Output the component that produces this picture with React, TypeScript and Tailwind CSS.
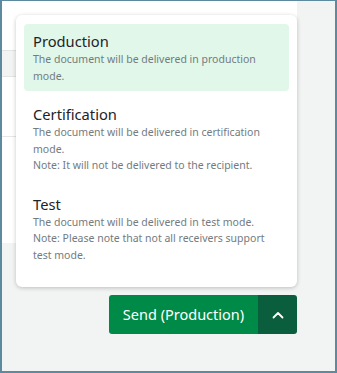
import React from "react";

const items = [
  {
    title: "Production",
    lines: ["The document will be delivered in production mode."],
    active: true,
  },
  {
    title: "Certification",
    lines: [
      "The document will be delivered in certification mode.",
      "Note: It will not be delivered to the recipient.",
    ],
    active: false,
  },
  {
    title: "Test",
    lines: [
      "The document will be delivered in test mode.",
      "Note: Please note that not all receivers support test mode.",
    ],
    active: false,
  },
];

export default function App() {
  return (
    <div
      className="relative w-[337px] h-[373px] bg-[#f2f3f3] border-t border-l-2 border-r-2 border-b-2 border-[#5e8aa0] overflow-hidden"
      style={{ fontFamily: '"Segoe UI", "Noto Sans", "Liberation Sans", sans-serif' }}
    >
      {/* background panel */}
      <div className="w-[295px] h-[242px] bg-white flex flex-col">
        <div className="h-[49px]" />
        <div className="h-[27px] bg-[#f2f3f3] border-t border-b border-[#e3e5e5]" />
        <div className="h-[59px]" />
        <div className="h-px bg-[#e5e7e7]" />
      </div>

      {/* split button */}
      <div className="flex justify-end w-[295px] mt-[52px]">
        <div className="flex h-[39px] rounded-[3px] overflow-hidden">
          <div className="w-[149px] bg-[#008a47] text-white text-[14.5px] flex items-center justify-center">
            Send (Production)
          </div>
          <div className="w-[39px] bg-[#0b5e3d] flex items-center justify-center">
            <svg width="12" height="8" viewBox="0 0 12 8" fill="none">
              <path d="M1.5 6.5 L6 2 L10.5 6.5" stroke="white" strokeWidth="1.8" strokeLinecap="round" strokeLinejoin="round" />
            </svg>
          </div>
        </div>
      </div>

      {/* dropdown */}
      <div className="absolute left-[14px] top-[14px] w-[281px] h-[272px] bg-white rounded-[6px] shadow-[0_1px_4px_rgba(0,0,0,0.22)] px-[8px] pt-[9px] flex flex-col gap-[6px]">
        {items.map((it) => (
          <div
            key={it.title}
            className={`px-[9px] py-[7px] rounded-[4px] ${it.active ? "bg-[#e0f7ea]" : ""}`}
          >
            <div className="text-[14.7px] leading-[20px] text-[#1e2328]">{it.title}</div>
            {it.lines.map((l) => (
              <div key={l} className="text-[10.5px] leading-[16.5px] text-[#737b80]">
                {l}
              </div>
            ))}
          </div>
        ))}
      </div>
    </div>
  );
}
